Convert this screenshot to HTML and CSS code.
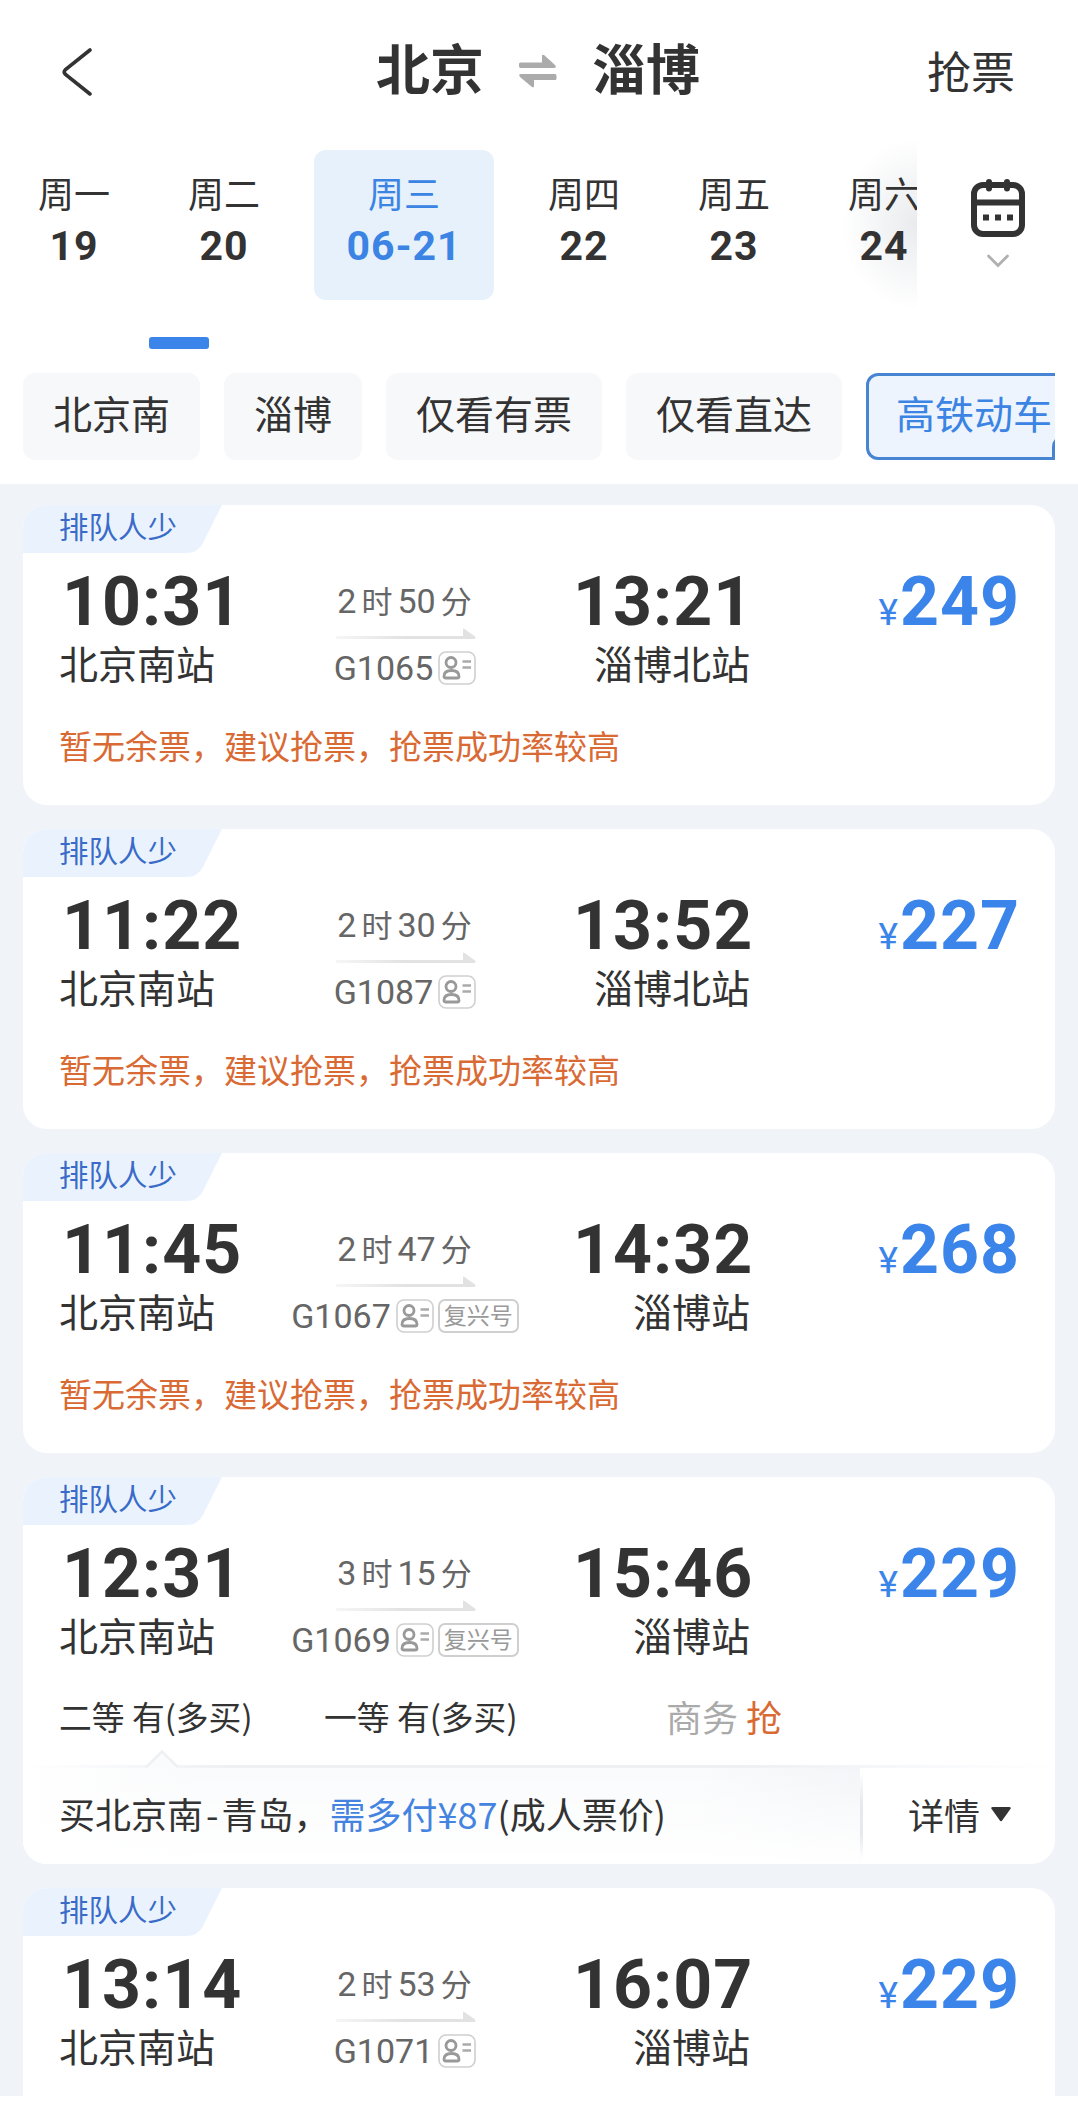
FILE: index.html
```
<!DOCTYPE html>
<html lang="zh-CN">

<head>
    <meta charset="utf-8">
    <title>北京 - 淄博 车票查询</title>
    <link rel="stylesheet" href="styles.css">
</head>

<body>
    <!-- Shared icons -->
    <svg class="sprite">
        <linearGradient id="fade" x1="0" x2="1" y1="0" y2="0">
            <stop offset="0" stop-color="#f6f6f6" />
            <stop offset="0.5" stop-color="#e2e2e2" />
            <stop offset="1" stop-color="#e2e2e2" />
        </linearGradient>
        <symbol id="arrow" viewBox="0 0 141 11">
            <path d="M1 8H128V1.5Q128 0 129.5 1L140 8.5Q141.500 11 139 11H1Z" fill="url(#fade)" />
        </symbol>
        <symbol id="idcard" viewBox="0 0 38 34">
            <rect x="1" y="1" width="36" height="32" rx="7" fill="none" stroke="#cfcfcf" stroke-width="1.6" />
            <g fill="none" stroke="#999" stroke-width="2.8">
                <circle cx="13" cy="11.500" r="5" />
                <path d="M6 25.500C6 21 9 19.500 13.500 19.500S21 21 21 25.500C21 27 20 27 19 27H8C7 27 6 27 6 25.500Z" />
                <path d="M24.500 10.500H33M24.500 16.500H33" stroke="#aaa" stroke-width="2.4" />
            </g>
        </symbol>
    </svg>

    <div class="screen">
        <div class="header">
            <svg class="back" width="32" height="50" viewBox="0 0 32 50">
                <path d="M29 3L4.500 22.500Q2 25 4.500 27.500L29 47" fill="none" stroke="#333" stroke-width="3.6" stroke-linecap="round" />
            </svg>
            <h1 class="title">
                <span>北京</span>
                <svg width="38" height="34" viewBox="0 0 38 34">
                    <path d="M1.500 8.500H23V2Q23 0 25 1L36 11Q38 14 35 14H1.500Q0 14 0 12V10Q0 8.500 1.500 8.500Z" fill="#ababab" />
                    <path d="M36 20H2Q-1 20 1 23L13 33Q15 34 15 32V26H36Q37.500 26 37.500 24.500V22Q37.500 20 36 20Z" fill="#ababab" />
                </svg>
                <span>淄博</span>
            </h1>
            <a class="grab">抢票</a>
        </div>

        <!-- Date bar -->
        <div class="dates">
            <div class="date-list">
                <div class="date"><span class="day">周一</span><span class="num">19</span></div>
                <div class="date"><span class="day">周二</span><span class="num">20</span></div>
                <div class="date active"><span class="day">周三</span><span class="num">06-21</span></div>
                <div class="date"><span class="day">周四</span><span class="num">22</span></div>
                <div class="date"><span class="day">周五</span><span class="num">23</span></div>
                <div class="date"><span class="day">周六</span><span class="num">24</span></div>
            </div>
            <div class="calendar">
                <svg width="56" height="60" viewBox="0 0 56 60">
                    <rect x="4" y="6" width="48" height="49" rx="9" fill="none" stroke="#333" stroke-width="6" />
                    <path d="M4 23.500H52" stroke="#333" stroke-width="6" />
                    <path d="M19 3V9.500M37 3V9.500" stroke="#333" stroke-width="6" stroke-linecap="round" />
                    <path d="M13 35.500h6v6h-6zM25 35.500h6v6h-6zM37 35.500h6v6h-6z" fill="#333" />
                </svg>
                <svg width="24" height="14" viewBox="0 0 24 14">
                    <path d="M2.500 2L12 11.500L21.500 2" fill="none" stroke="#b0b0b0" stroke-width="2.8" stroke-linecap="round" />
                </svg>
            </div>
        </div>
        <div class="indicator"></div>

        <!-- Filters -->
        <div class="filters">
            <div class="chip">北京南</div>
            <div class="chip">淄博</div>
            <div class="chip">仅看有票</div>
            <div class="chip">仅看直达</div>
            <div class="chip selected">高铁动车<i class="corner"></i></div>
        </div>

        <!-- Train list -->
        <div class="list">
            <div class="card">
                <div class="tag">排队人少</div>
                <div class="route">
                    <div class="stop"><div class="time">10:31</div><div class="station">北京南站</div></div>
                    <div class="train">
                        <div class="duration"><b>2</b>时<b>50</b>分</div>
                        <svg class="arrow"><use href="#arrow" /></svg>
                        <div class="number">G1065<svg class="idcard"><use href="#idcard" /></svg></div>
                    </div>
                    <div class="stop end"><div class="time">13:21</div><div class="station">淄博北站</div></div>
                    <div class="price"><small>¥</small>249</div>
                </div>
                <div class="notice">暂无余票，建议抢票，抢票成功率较高</div>
            </div>

            <div class="card">
                <div class="tag">排队人少</div>
                <div class="route">
                    <div class="stop"><div class="time">11:22</div><div class="station">北京南站</div></div>
                    <div class="train">
                        <div class="duration"><b>2</b>时<b>30</b>分</div>
                        <svg class="arrow"><use href="#arrow" /></svg>
                        <div class="number">G1087<svg class="idcard"><use href="#idcard" /></svg></div>
                    </div>
                    <div class="stop end"><div class="time">13:52</div><div class="station">淄博北站</div></div>
                    <div class="price"><small>¥</small>227</div>
                </div>
                <div class="notice">暂无余票，建议抢票，抢票成功率较高</div>
            </div>

            <div class="card">
                <div class="tag">排队人少</div>
                <div class="route">
                    <div class="stop"><div class="time">11:45</div><div class="station">北京南站</div></div>
                    <div class="train">
                        <div class="duration"><b>2</b>时<b>47</b>分</div>
                        <svg class="arrow"><use href="#arrow" /></svg>
                        <div class="number">G1067<svg class="idcard"><use href="#idcard" /></svg><span class="badge">复兴号</span></div>
                    </div>
                    <div class="stop end"><div class="time">14:32</div><div class="station">淄博站</div></div>
                    <div class="price"><small>¥</small>268</div>
                </div>
                <div class="notice">暂无余票，建议抢票，抢票成功率较高</div>
            </div>

            <div class="card open">
                <div class="tag">排队人少</div>
                <div class="route">
                    <div class="stop"><div class="time">12:31</div><div class="station">北京南站</div></div>
                    <div class="train">
                        <div class="duration"><b>3</b>时<b>15</b>分</div>
                        <svg class="arrow"><use href="#arrow" /></svg>
                        <div class="number">G1069<svg class="idcard"><use href="#idcard" /></svg><span class="badge">复兴号</span></div>
                    </div>
                    <div class="stop end"><div class="time">15:46</div><div class="station">淄博站</div></div>
                    <div class="price"><small>¥</small>229</div>
                </div>
                <div class="seats">
                    <span>二等 有(多买)</span>
                    <span>一等 有(多买)</span>
                    <span class="soldout">商务 <em>抢</em></span>
                </div>
                <div class="offer">
                    <svg class="caret" width="32" height="18" viewBox="0 0 32 18">
                        <path d="M0 18L1 16L16 1.500L31 16L32 18Z" fill="#fafbfc" />
                        <path d="M0 16.500H1L16 1.500L31 16.500H32" fill="none" stroke="#eef0f4" stroke-width="2.6" />
                    </svg>
                    <div class="offer-text">买北京南<i>-</i>青岛，<em>需多付¥87</em>(成人票价)</div>
                    <div class="detail">详情
                        <svg width="20" height="15" viewBox="0 0 20 15">
                            <path d="M2 0H18Q21 0 19 2.500L11.500 13Q10 15.500 8.500 13L1 2.500Q-1 0 2 0Z" fill="#333" />
                        </svg>
                    </div>
                </div>
            </div>

            <div class="card">
                <div class="tag">排队人少</div>
                <div class="route">
                    <div class="stop"><div class="time">13:14</div><div class="station">北京南站</div></div>
                    <div class="train">
                        <div class="duration"><b>2</b>时<b>53</b>分</div>
                        <svg class="arrow"><use href="#arrow" /></svg>
                        <div class="number">G1071<svg class="idcard"><use href="#idcard" /></svg></div>
                    </div>
                    <div class="stop end"><div class="time">16:07</div><div class="station">淄博站</div></div>
                    <div class="price"><small>¥</small>229</div>
                </div>
            </div>
        </div>
    </div>
</body>

</html>
```
FILE: styles.css
```
* {
    box-sizing: border-box;
}

body {
    margin: 0;
    background-color: #fff;
    color: #333;
    font-family: "Noto Sans CJK SC", sans-serif;
}

em,
i {
    font-style: normal;
}

.sprite {
    display: block;
    width: 0;
    height: 0;
}

.screen {
    width: 1078px;
    height: 2096px;
    overflow: hidden;
}

/* Header */
.header {
    display: grid;
    grid-template-columns: 1fr auto 1fr;
    align-items: center;
    height: 138px;
    padding: 0 63px 0 61px;
}

.back {
    margin-top: 5px;
}

.title {
    display: flex;
    align-items: center;
    gap: 35px;
    margin: 0;
    font-size: 54px;
    line-height: 78px;
    font-weight: 700;
}

.title span {
    margin-top: -4px;
}

.title svg {
    margin-top: 4px;
}

.grab {
    justify-self: end;
    margin-top: 2px;
    font-size: 44px;
    line-height: 60px;
}

/* Date bar */
.dates {
    display: flex;
    height: 172px;
}

.date-list {
    display: flex;
    width: 917px;
    padding-top: 12px;
    overflow: hidden;
    background: radial-gradient(ellipse 75px 86px at 100% 50%, #eaebee, #f5f6f7 55%, #fff);
}

.date {
    display: flex;
    flex: none;
    flex-direction: column;
    align-items: center;
    width: 150px;
    height: 150px;
    padding-top: 21px;
    border-radius: 12px;
}

.date.active {
    width: 180px;
    margin: 0 15px;
    background-color: #e6f1fc;
    color: #3b84e4;
}

.date-list .date:first-child {
    margin-left: -1px;
}

.day {
    font-size: 36px;
    line-height: 42px;
}

.num {
    margin-top: 12px;
    font-family: Roboto, sans-serif;
    font-size: 41px;
    font-weight: 700;
    line-height: 42px;
    letter-spacing: 1px;
}

.calendar {
    display: flex;
    flex: 1;
    flex-direction: column;
    align-items: center;
    gap: 15px;
    padding-top: 41px;
}

.indicator {
    width: 60px;
    height: 12px;
    margin: 27px 0 24px 149px;
    border-radius: 3px;
    background-color: #3b84ea;
}

/* Filters */
.filters {
    display: flex;
    gap: 24px;
    height: 87px;
    margin: 0 23px 24px;
    overflow: hidden;
}

.chip {
    position: relative;
    flex: none;
    height: 87px;
    padding: 0 30px;
    border-radius: 12px;
    background-color: #f7f8fa;
    font-size: 39px;
    line-height: 79px;
}

.chip.selected {
    padding: 0 27px;
    border: 3px solid #4785d3;
    background-color: #edf4fe;
    color: #3b84e4;
    line-height: 73px;
}

.corner {
    position: absolute;
    right: -3px;
    bottom: -3px;
    width: 30px;
    height: 25px;
    border-radius: 12px 0 12px 0;
    background-color: #4785d3;
}

/* Train list */
.list {
    display: flex;
    flex-direction: column;
    gap: 24px;
    padding: 21px 23px;
    background-color: #f0f4f8;
}

.card {
    flex: none;
    height: 300px;
    border-radius: 24px;
    background-color: #fff;
    overflow: hidden;
}

.card.open {
    height: 387px;
}

.tag {
    width: 199px;
    height: 48px;
    padding-left: 36px;
    background-color: #eaf3fd;
    clip-path: path("M0 0H199L180 38Q175 48 163 48H0Z");
    color: #3a6bc8;
    font-size: 29.5px;
    line-height: 41px;
}

.route {
    display: grid;
    grid-template-columns: 182px 326px 182px 1fr;
    height: 152px;
    padding: 9px 35px 0 37px;
}

.time,
.price {
    font-family: Roboto, sans-serif;
    font-size: 68px;
    font-weight: 700;
    line-height: 80px;
    letter-spacing: 1px;
    white-space: nowrap;
}

.time {
    padding-left: 2px;
}

.end .time {
    padding-left: 5px;
}

.station {
    margin-left: -1px;
    font-size: 39px;
    line-height: 40px;
}

.end .station {
    text-align: right;
}

.train {
    display: flex;
    flex-direction: column;
    align-items: center;
    color: #666;
}

.duration {
    height: 66px;
    padding: 17px 6px 0 0;
    font-size: 31px;
    line-height: 42px;
}

.duration b {
    margin: 0 5px;
    font-family: Roboto, sans-serif;
    font-size: 34px;
    font-weight: 400;
}

.arrow {
    width: 141px;
    height: 11px;
}

.number {
    display: flex;
    align-items: center;
    gap: 4px;
    height: 34px;
    margin-top: 12px;
    font-family: Roboto, sans-serif;
    font-size: 34px;
}

.idcard {
    width: 38px;
    height: 34px;
    margin-left: 1px;
}

.badge {
    height: 34px;
    padding: 0 4px;
    border: 2px solid #cfcfcf;
    border-radius: 7px;
    color: #999;
    font-family: "Noto Sans CJK SC", sans-serif;
    font-size: 23px;
    line-height: 27px;
}

.price {
    color: #3b84ea;
    text-align: right;
}

.price small {
    margin-right: 1px;
    font-size: 37px;
    font-weight: 400;
}

.notice {
    padding: 19px 36px 0;
    color: #d96a34;
    font-size: 33px;
    line-height: 42px;
}

.seats {
    display: grid;
    grid-template-columns: 265px 342px 1fr;
    height: 88px;
    padding: 18px 36px 0;
    font-size: 32.8px;
    line-height: 42px;
}

.soldout {
    color: #aaa;
    font-size: 36px;
}

.seats em {
    color: #d96a34;
}

/* Cross-buy offer under the seats */
.offer {
    position: relative;
    display: flex;
    height: 99px;
    border-top: 3px solid;
    border-image: linear-gradient(to right, #fff, #eef0f4 20%, #eef0f4 70%, #fff) 1;
    font-size: 36px;
    line-height: 90px;
}

.caret {
    position: absolute;
    top: -18px;
    left: 123px;
}

.offer-text {
    width: 837px;
    padding-left: 36px;
    background: linear-gradient(to bottom, transparent, #fff), linear-gradient(to right, #fff, #fafbfc 20%, #fafbfc 80%, #f3f5f8);
    white-space: nowrap;
}

.offer-text i {
    padding: 0 3px;
}

.offer-text em {
    color: #4583e0;
}

.detail {
    display: flex;
    align-items: center;
    gap: 11px;
    height: 92px;
    padding-left: 45px;
    border-left: 3px solid;
    border-image: linear-gradient(to bottom, #fff 5%, #e6e8ee 40%, #e6e8ee 70%, #fff) 1;
}
```
